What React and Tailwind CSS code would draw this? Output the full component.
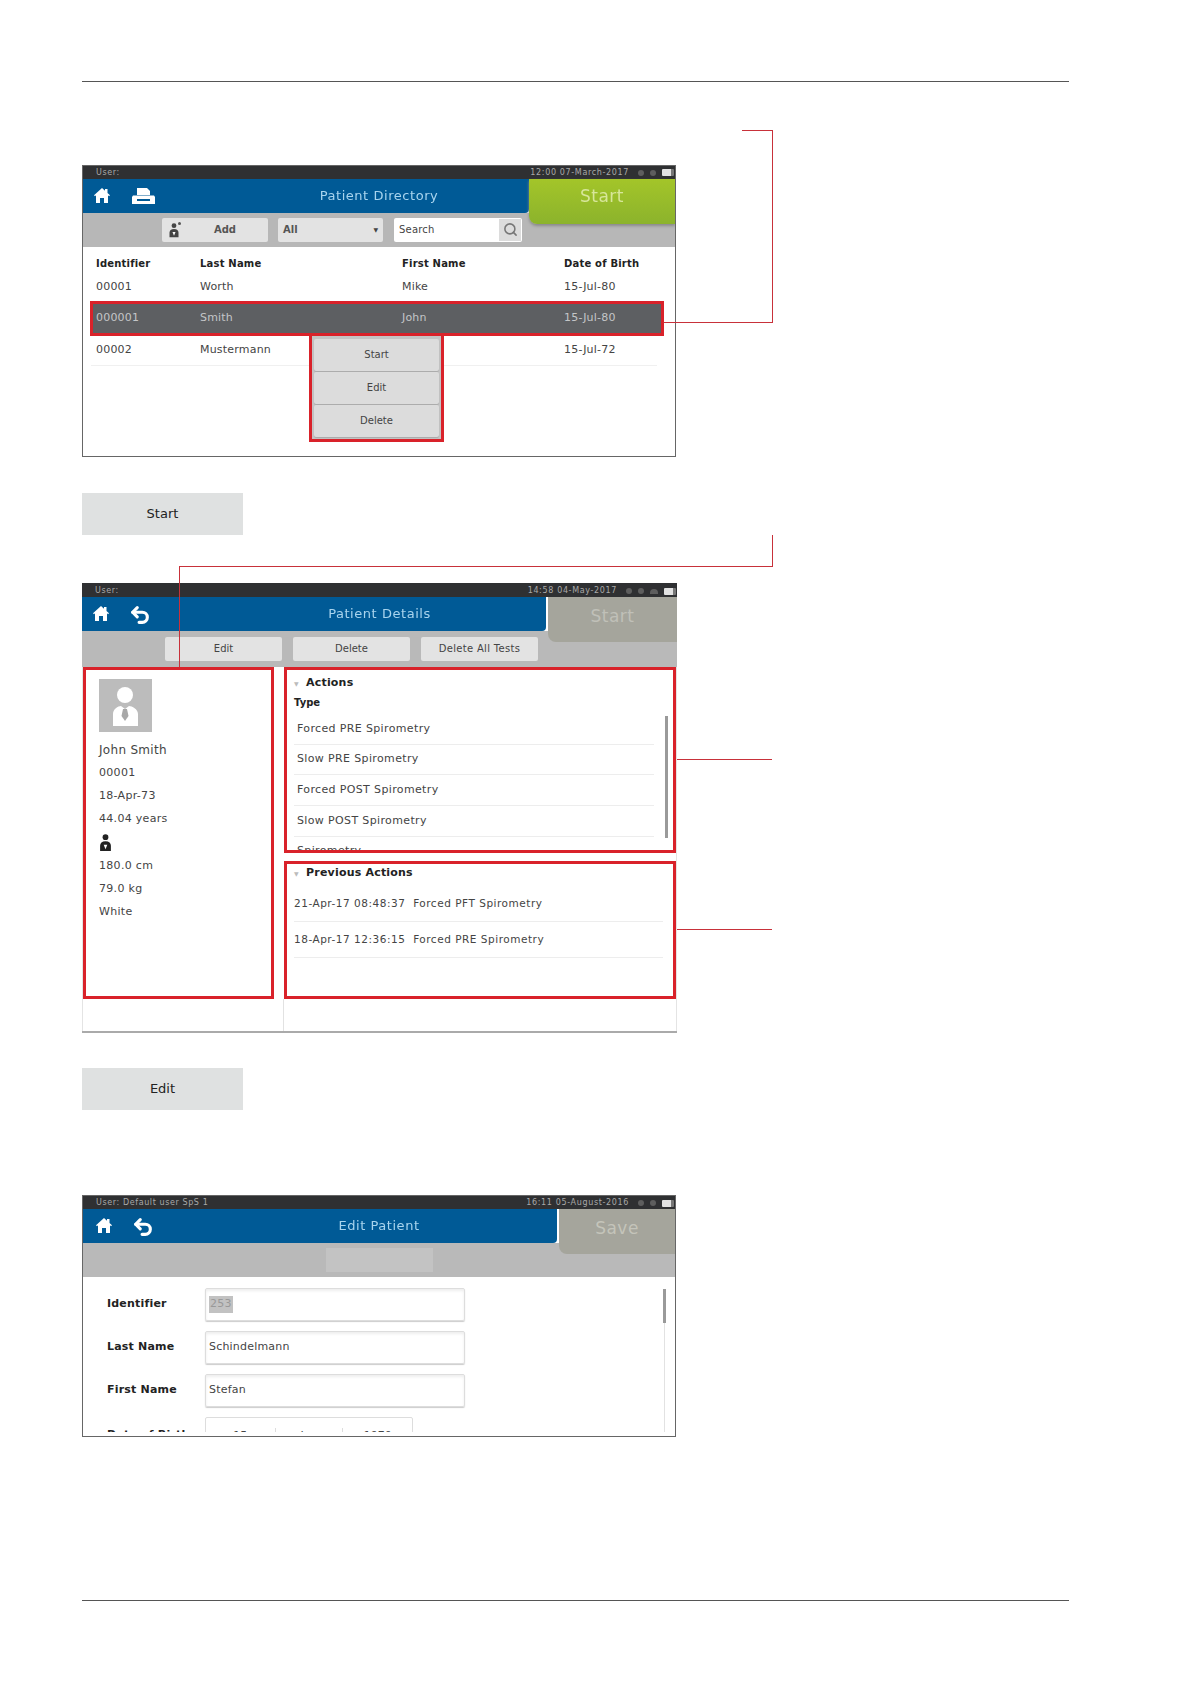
import React from "react";
import { Undo2, Search } from "lucide-react";

const Home = () => (
  <svg viewBox="0 0 16 15" className="w-[16px] h-[15px]">
    <path d="M8 0l3 2.700V1h2.500v3.900L16 7.200l-1 1-1-.9V15h-4v-5H6v5H2V7.300l-1 .9-1-1z" fill="#fff" />
  </svg>
);

const Printer = () => (
  <svg viewBox="0 0 23 16" className="w-[23px] h-[16px]">
    <path d="M5 0h10l3 3v4H5z" fill="#fff" />
    <path d="M1 7.500h21l1 1.500v7H0V9zM5 11v2h13v-2z" fill="#fff" fillRule="evenodd" />
  </svg>
);

const Back = () => <Undo2 className="text-white -mt-[2px]" size={22} strokeWidth={3.4} />;

const PersonSmall = ({ className }) => (
  <svg viewBox="0 0 14 20" className={className}>
    <circle cx="7" cy="3.500" r="3.200" fill="currentColor" />
    <path d="M1 19v-6c0-3 2-5 6-5s6 2 6 5v6z" fill="currentColor" />
    <path d="M5 12h4l-2 5z" fill="#fff" />
  </svg>
);

const StatusBar = ({ user, time, wifi, bar }) => (
  <div
    className={`${bar} bg-[#2f3032] flex items-center justify-between pl-[11px] pr-[1px] text-[8px] text-[#a9a9a9] shrink-0`}
  >
    <span className="pl-[2px] tracking-[0.6px]">{user}</span>
    <div className="flex items-center gap-[6px]">
      <span className="mr-[3px] tracking-[0.65px]">{time}</span>
      <span className="w-[6px] h-[6px] rounded-full bg-[#5e5e5e]"></span>
      <span className="w-[6px] h-[6px] rounded-full bg-[#5e5e5e]"></span>
      {wifi && <span className="w-[8px] h-[5px] rounded-t-full bg-[#5e5e5e]"></span>}
      <span className="w-[12px] h-[7px] bg-[#e2e2e2] rounded-[1px] border-r-[3px] border-[#777]"></span>
    </div>
  </div>
);

const Header = ({ title, icons, action, green, blueWidth, iconsLeft, gap }) => (
  <div className="relative h-[34px] shrink-0 z-10">
    <div className={`${blueWidth} h-full bg-[#005a96] rounded-br-[4px]`}></div>
    <div className={`absolute ${iconsLeft} ${gap} top-[9px] flex items-start`}>{icons}</div>
    <div className="absolute inset-0 flex items-center justify-center text-[13px] tracking-[0.55px] text-[#a8d4ee]">
      {title}
    </div>
    <div
      className={`absolute right-0 top-0 h-[45px] rounded-bl-[8px] flex items-center justify-center text-[17px] tracking-[0.5px] ${
        green
          ? "w-[146px] pb-[9px] bg-gradient-to-b from-[#a3c529] to-[#8cb32c] text-[#d7e69a] shadow-[0_2px_3px_#8a8a8a]"
          : action === "Save"
          ? "w-[116px] pb-[5px] bg-[#a5a59c] text-[#c4c4ba]"
          : "w-[129px] pb-[5px] bg-[#a5a59c] text-[#c0c0b8]"
      }`}
    >
      {action}
    </div>
  </div>
);

const ToolBtn = ({ className, children }) => (
  <div className={`h-[24px] bg-[#e3e3e3] rounded-[2px] flex items-center text-[10px] text-[#444] ${className}`}>
    {children}
  </div>
);

const Row = ({ cells }) => (
  <div className="grid grid-cols-[104px_202px_162px_1fr] h-[31px] items-center ml-[8px] mr-[18px] pl-[5px] text-[11px] tracking-[0.2px] text-[#444] border-b border-[#f0f0f0]">
    {cells.map((c, i) => (
      <span key={i}>{c}</span>
    ))}
  </div>
);

const MenuBtn = ({ children }) => (
  <div className="h-[32px] bg-[#dcdcdc] rounded-[2px] flex items-center justify-center text-[10px] text-[#444] shadow-[0_1px_1px_#aaa]">
    {children}
  </div>
);

const Directory = () => (
  <div className="w-[594px] h-[292px] border border-[#666] flex flex-col overflow-hidden">
    <StatusBar user="User:" time="12:00 07-March-2017" bar="h-[13px]" />
    <Header
      title="Patient Directory"
      blueWidth="w-[446px]"
      iconsLeft="left-[11px]"
      gap="gap-[22px]"
      green
      action="Start"
      icons={
        <>
          <Home />
          <Printer />
        </>
      }
    />
    <div className="h-[34px] bg-[#b7b7b7] flex items-center pl-[79px] pb-[1px] gap-[10px] shrink-0">
      <ToolBtn className="w-[106px] relative justify-center">
        <PersonSmall className="absolute left-[6px] top-[5px] w-[12px] h-[15px] text-[#444]" />
        <span className="absolute left-[16px] top-[4px] w-[3px] h-[3px] rounded-full bg-[#555]"></span>
        <span className="font-bold pl-[20px] text-[10px] text-[#555]">Add</span>
      </ToolBtn>
      <ToolBtn className="w-[105px] justify-between px-[5px]">
        <span className="font-bold text-[#555]">All</span>
        <span className="text-[6px]">▼</span>
      </ToolBtn>
      <div className="w-[128px] h-[24px] ml-[1px] bg-white rounded-[2px] flex items-center justify-between pl-[5px] pr-[1px] text-[10px] tracking-[0.2px] text-[#444]">
        <span>Search</span>
        <span className="w-[22px] h-[22px] bg-[#dcdcdc] flex items-center justify-center">
          <Search size={15} strokeWidth={2.5} className="text-[#777]" />
        </span>
      </div>
    </div>
    <div className="flex-1 bg-white relative">
      <div className="grid grid-cols-[104px_202px_162px_1fr] h-[25px] items-center ml-[8px] pl-[5px] pt-[7px] text-[10px] font-bold text-[#222] tracking-[0.2px]">
        <span>Identifier</span>
        <span>Last Name</span>
        <span>First Name</span>
        <span>Date of Birth</span>
      </div>
      <Row cells={["00001", "Worth", "Mike", "15-Jul-80"]} />
      <div className="border-[3px] border-[#d9222a] ml-[7px] mr-[11px] -mt-[2px] -mb-[1px] relative">
        <div className="grid grid-cols-[104px_202px_162px_1fr] h-[29px] items-center pl-[3px] text-[11px] tracking-[0.2px] text-[#c4c6c8] bg-[#5d5f62]">
          <span>000001</span>
          <span>Smith</span>
          <span>John</span>
          <span>15-Jul-80</span>
        </div>
      </div>
      <Row cells={["00002", "Mustermann", "", "15-Jul-72"]} />
      <div className="absolute left-[226px] top-[86px] w-[135px] h-[109px] border-[3px] border-[#d9222a] bg-[#c4c4c4] p-[2px] flex flex-col gap-[1px] justify-center">
        <MenuBtn>Start</MenuBtn>
        <MenuBtn>Edit</MenuBtn>
        <MenuBtn>Delete</MenuBtn>
      </div>
    </div>
  </div>
);

const Info = ({ children }) => (
  <div className="h-[23.3px] flex items-center text-[11px] tracking-[0.3px] text-[#444]">{children}</div>
);

const ActionRow = ({ children }) => (
  <div className="h-[30.7px] flex items-center pl-[3px] mr-[19px] border-b border-[#ededed] text-[11px] tracking-[0.36px] text-[#444]">
    {children}
  </div>
);

const Details = () => (
  <div className="w-[595px] h-[450px] flex flex-col border-b-2 border-[#aaa]">
    <StatusBar user="User:" time="14:58 04-May-2017" wifi bar="h-[14px] pt-[2px]" />
    <Header
      title="Patient Details"
      blueWidth="w-[464px]"
      iconsLeft="left-[11px]"
      gap="gap-[20px]"
      action="Start"
      icons={
        <>
          <Home />
          <Back />
        </>
      }
    />
    <div className="h-[36px] bg-[#b9b9b9] flex items-center pl-[83px] gap-[11px] shrink-0 pb-[1px]">
      <ToolBtn className="w-[117px] justify-center">Edit</ToolBtn>
      <ToolBtn className="w-[117px] justify-center">Delete</ToolBtn>
      <ToolBtn className="w-[117px] justify-center tracking-[0.3px]">Delete All Tests</ToolBtn>
    </div>
    <div className="flex-1 bg-white flex flex-col border-x border-[#e4e4e4]">
      <div className="flex gap-[10px] h-[332px]">
        <div className="w-[191px] border-[3px] border-[#d9222a] pl-[13px] pt-[9px]">
          <div className="w-[53px] h-[53px] bg-[#bcbcbc] mb-[6px]">
            <svg viewBox="0 0 53 53" className="w-[53px] h-[53px]">
              <circle cx="26" cy="16" r="8" fill="#fff" />
              <path d="M14 47V35c0-5 5-8 8-8l4 3 4-3c3 0 9 3 9 8v12z" fill="#fff" />
              <path d="M24 30h4l1.500 7-3.500 5-3.500-5z" fill="#a8a8a8" />
            </svg>
          </div>
          <Info>
            <span className="text-[12px]">John Smith</span>
          </Info>
          <Info>00001</Info>
          <Info>18-Apr-73</Info>
          <Info>44.04 years</Info>
          <Info>
            <PersonSmall className="w-[13px] h-[18px] text-[#222]" />
          </Info>
          <Info>180.0 cm</Info>
          <Info>79.0 kg</Info>
          <Info>White</Info>
        </div>
        <div className="flex-1 flex flex-col gap-[8px] min-w-0">
          <div className="h-[186px] border-[3px] border-[#d9222a] overflow-hidden relative pl-[7px] pt-[6px]">
            <div className="flex items-center h-[14px] text-[11px] font-bold text-[#222] tracking-[0.2px]">
              <span className="w-[12px] text-[6px] text-[#bbb]">▼</span>
              <span>Actions</span>
            </div>
            <div className="text-[10px] font-bold text-[#222] h-[14px] mt-[5px] flex items-center">Type</div>
            <div className="mt-[5px]">
              <ActionRow>Forced PRE Spirometry</ActionRow>
              <ActionRow>Slow PRE Spirometry</ActionRow>
              <ActionRow>Forced POST Spirometry</ActionRow>
              <ActionRow>Slow POST Spirometry</ActionRow>
              <ActionRow>Spirometry</ActionRow>
            </div>
            <div className="absolute right-[5px] top-[46px] w-[3px] h-[122px] bg-[#9a9a9a]"></div>
          </div>
          <div className="flex-1 border-[3px] border-[#d9222a] pl-[7px] pt-[2px]">
            <div className="flex items-center h-[14px] text-[11px] font-bold text-[#222] tracking-[0.2px]">
              <span className="w-[12px] text-[6px] text-[#bbb]">▼</span>
              <span>Previous Actions</span>
            </div>
            <div className="mt-[6px] text-[#444] text-[10.5px] tracking-[0.52px]">
              <div className="h-[36px] flex items-center mr-[10px] border-b border-[#ededed]">21-Apr-17 08:48:37&nbsp; Forced PFT Spirometry</div>
              <div className="h-[36px] flex items-center mr-[10px] border-b border-[#ededed]">18-Apr-17 12:36:15&nbsp; Forced PRE Spirometry</div>
            </div>
          </div>
        </div>
      </div>
      <div className="flex-1 flex">
        <div className="w-[201px] border-r border-[#e2e2e2]"></div>
      </div>
    </div>
  </div>
);

const Field = ({ label, children }) => (
  <div className="flex items-center h-[33px] mb-[10px] text-[11px]">
    <span className="w-[98px] font-bold text-[#222] tracking-[0.2px]">{label}</span>
    {children}
  </div>
);

const Input = ({ children }) => (
  <div className="w-[260px] h-[33px] border border-[#ddd] rounded-[2px] shadow-[inset_0_2px_3px_#eee,0_1px_1px_#ccc] flex items-center pl-[3px] text-[#444] text-[11px] tracking-[0.2px]">
    {children}
  </div>
);

const EditPatient = () => (
  <div className="w-[594px] h-[242px] border border-[#666] flex flex-col overflow-hidden">
    <StatusBar user="User: Default user SpS 1" time="16:11 05-August-2016" bar="h-[13px] pt-[1px]" />
    <Header
      title="Edit Patient"
      blueWidth="w-[474px]"
      iconsLeft="left-[13px]"
      gap="gap-[20px]"
      action="Save"
      icons={
        <>
          <Home />
          <Back />
        </>
      }
    />
    <div className="h-[34px] bg-[#b9b9b9] flex items-center justify-center shrink-0">
      <div className="w-[107px] h-[24px] bg-[#c3c3c3]"></div>
    </div>
    <div className="flex-1 bg-white">
      <div className="h-[155px] relative pl-[24px] pt-[11px] overflow-hidden">
        <Field label="Identifier">
          <Input>
            <span className="bg-[#c2c2c2] text-[#999] px-[1px]">253</span>
          </Input>
        </Field>
        <Field label="Last Name">
          <Input>Schindelmann</Input>
        </Field>
        <Field label="First Name">
          <Input>Stefan</Input>
        </Field>
        <div className="flex h-[33px] text-[11px] pt-[10px]">
          <span className="w-[98px] font-bold text-[#222] tracking-[0.2px]">Date of Birth</span>
          <div className="w-[208px] h-[33px] -mt-[10px] pt-[10px] border border-[#ddd] rounded-[2px] grid grid-cols-3 text-center text-[#444]">
            <span>15</span>
            <span className="border-x border-[#ddd]">Jun</span>
            <span>1970</span>
          </div>
        </div>
        <div className="absolute right-[9px] top-[12px] w-[3px] h-[34px] bg-[#9a9a9a]"></div>
        <div className="absolute right-[10px] top-[46px] w-[1px] h-[109px] bg-[#e2e2e2]"></div>
      </div>
    </div>
  </div>
);

const SoftKey = ({ children }) => (
  <div className="w-[161px] h-[42px] bg-[#dfe1e1] flex items-center justify-center text-[13px] text-[#222]">{children}</div>
);

export default function App() {
  return (
    <div className="relative w-[1190px] h-[1684px] bg-white overflow-hidden font-['DejaVu_Sans',sans-serif]">
      <div className="pl-[82px] pt-[81px]">
        <div className="w-[987px] h-[1px] bg-[#555]"></div>
        <div className="mt-[83px] blur-[0.5px]">
          <Directory />
        </div>
        <div className="mt-[36px]">
          <SoftKey>Start</SoftKey>
        </div>
        <div className="mt-[48px] blur-[0.5px]">
          <Details />
        </div>
        <div className="mt-[35px]">
          <SoftKey>Edit</SoftKey>
        </div>
        <div className="mt-[85px] blur-[0.5px]">
          <EditPatient />
        </div>
        <div className="mt-[163px] w-[987px] h-[1px] bg-[#555]"></div>
      </div>

      {/* callout lines */}
      <div className="absolute left-[742px] top-[130px] w-[31px] h-[192px] border-t border-r border-[#c8313a]"></div>
      <div className="absolute left-[663px] top-[322px] w-[110px] h-[1px] bg-[#c8313a]"></div>
      <div className="absolute left-[179px] top-[535px] w-[594px] h-[32px] border-b border-r border-[#c8313a]"></div>
      <div className="absolute left-[179px] top-[566px] w-[1px] h-[101px] bg-[#c8313a]"></div>
      <div className="absolute left-[677px] top-[759px] w-[95px] h-[1px] bg-[#c8313a]"></div>
      <div className="absolute left-[677px] top-[929px] w-[95px] h-[1px] bg-[#c8313a]"></div>
    </div>
  );
}
